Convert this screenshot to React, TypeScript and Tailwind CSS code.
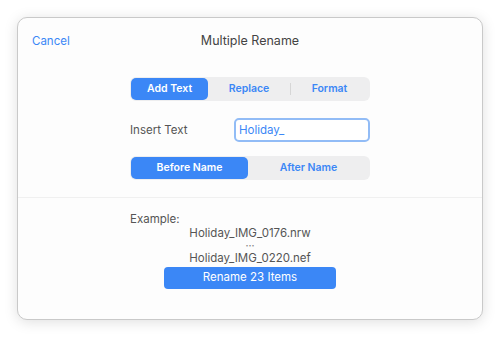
import { useState } from 'react';

const font = { fontFamily: 'Inter, "Liberation Sans", sans-serif' };

function Segmented({
  options,
  active,
  onChange,
  widths,
}: {
  options: string[];
  active: number;
  onChange: (i: number) => void;
  widths: string[];
}) {
  return (
    <div className="mx-auto flex h-[24px] w-[240px] items-center rounded-[6px] bg-[#eeeeef] p-px">
      {options.map((opt, i) => {
        const isActive = i === active;
        const showDivider = i > 0 && i !== active && i - 1 !== active;
        return (
          <div key={opt} className={`relative flex h-full items-center ${widths[i]}`}>
            {showDivider && <div className="absolute left-0 top-[5px] h-[12px] w-px bg-[#d6d6d6]" />}
            <button
              onClick={() => onChange(i)}
              className={`flex h-full w-full items-center justify-center rounded-[5px] text-[10.5px] font-semibold ${
                isActive ? 'bg-[#3b87f6] text-white' : 'text-[#3b87f6]'
              }`}
            >
              {opt}
            </button>
          </div>
        );
      })}
    </div>
  );
}

export default function App() {
  const [mode, setMode] = useState(0);
  const [position, setPosition] = useState(0);
  const [text, setText] = useState('Holiday_');

  return (
    <div className="h-[337px] w-[500px] bg-white p-[17px]" style={font}>
      <div className="flex h-[303px] w-[466px] flex-col rounded-[10px] border border-[#c9c9c9] bg-[#fdfdfd] shadow-[0_2px_14px_rgba(0,0,0,0.13)]">
        {/* Header */}
        <div className="relative flex h-[47px] items-center px-[14px]">
          <button className="text-[11.5px] text-[#3b87f6]">Cancel</button>
          <div className="absolute inset-x-0 text-center text-[12.5px] text-[#444]">Multiple Rename</div>
        </div>

        <div className="mt-[12px]">
          <Segmented
            options={['Add Text', 'Replace', 'Format']}
            active={mode}
            onChange={setMode}
            widths={['w-[77px]', 'w-[82px]', 'flex-1']}
          />
        </div>

        <div className="mx-auto mt-[17px] flex h-[24px] w-[240px] items-center justify-between">
          <span className="pt-[2px] text-[11.5px] text-[#555]">Insert Text</span>
          <input
            value={text}
            onChange={(e) => setText(e.target.value)}
            className="h-[24px] w-[136px] rounded-[5px] border-[2px] border-[#92bcf6] bg-white px-[3px] text-[11.5px] text-[#3b87f6] outline-none"
          />
        </div>

        <div className="mt-[14px]">
          <Segmented
            options={['Before Name', 'After Name']}
            active={position}
            onChange={setPosition}
            widths={['w-[117px]', 'flex-1']}
          />
        </div>

        <div className="mt-[17px] h-px w-full bg-[#f0f0f0]" />

        {/* Example preview */}
        <div className="mx-auto mt-[14px] flex w-[240px] flex-col text-[11.5px] leading-[14px] text-[#555]">
          <div className="flex h-[14px] items-center">Example:</div>
          <div className="flex h-[14px] items-center justify-center">Holiday_IMG_0176.nrw</div>
          <div className="flex h-[11px] items-center justify-center text-[9px] font-bold leading-[9px] text-[#888]">···</div>
          <div className="flex h-[14px] items-center justify-center">Holiday_IMG_0220.nef</div>
        </div>

        <button className="mx-auto mt-[2px] flex h-[22px] w-[172px] items-center justify-center rounded-[4px] bg-[#3b87f6] text-[11.5px] text-white">
          Rename 23 Items
        </button>
      </div>
    </div>
  );
}
